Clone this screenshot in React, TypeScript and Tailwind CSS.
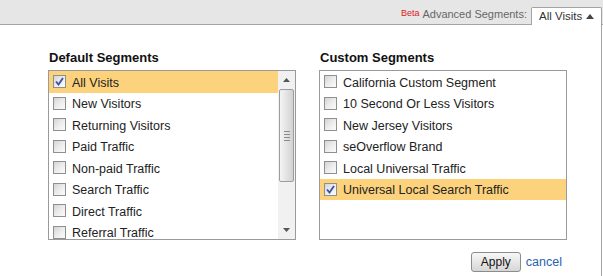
const defaults = [
  { label: "All Visits", checked: true },
  { label: "New Visitors" },
  { label: "Returning Visitors" },
  { label: "Paid Traffic" },
  { label: "Non-paid Traffic" },
  { label: "Search Traffic" },
  { label: "Direct Traffic" },
  { label: "Referral Traffic" },
];

const customs = [
  { label: "California Custom Segment" },
  { label: "10 Second Or Less Visitors" },
  { label: "New Jersey Visitors" },
  { label: "seOverflow Brand" },
  { label: "Local Universal Traffic" },
  { label: "Universal Local Search Traffic", checked: true },
];

function Checkbox({ checked }: { checked?: boolean }) {
  return (
    <span className="flex h-[13px] w-[13px] shrink-0 items-center justify-center border border-[#8e8f8f] bg-gradient-to-br from-[#d4d4d4] via-[#ececec] to-[#fbfbfb]">
      {checked && (
        <svg width="9" height="9" viewBox="0 0 9 9">
          <path d="M1 4.5 L3.5 7.5 L8 1" fill="none" stroke="#3b4fa6" strokeWidth="1.8" />
        </svg>
      )}
    </span>
  );
}

function Row({ label, checked }: { label: string; checked?: boolean }) {
  return (
    <div
      className={`flex h-[21.5px] items-center pl-[4px] ${checked ? "bg-[#fdd27c]" : ""}`}
    >
      <Checkbox checked={checked} />
      <span className="ml-[6px] whitespace-nowrap pt-[2px] leading-[14px]">{label}</span>
    </div>
  );
}

function Scrollbar() {
  return (
    <div className="flex w-[17px] shrink-0 flex-col bg-[#f1f1f1]">
      {/* up arrow */}
      <div className="flex h-[18px] items-center justify-center">
        <svg width="7" height="4" viewBox="0 0 7 4">
          <path d="M0 4 L3.5 0 L7 4 Z" fill="#555" />
        </svg>
      </div>
      {/* thumb */}
      <div className="mx-[1px] flex h-[93px] items-center justify-center rounded-[2px] border border-[#9c9c9c] bg-gradient-to-r from-[#f4f4f4] to-[#d2d2d2]">
        <div className="flex flex-col gap-[2px]">
          <span className="block h-px w-[6px] bg-[#8a8a8a]" />
          <span className="block h-px w-[6px] bg-[#8a8a8a]" />
          <span className="block h-px w-[6px] bg-[#8a8a8a]" />
          <span className="block h-px w-[6px] bg-[#8a8a8a]" />
        </div>
      </div>
      <div className="flex-1" />
      {/* down arrow */}
      <div className="flex h-[18px] items-center justify-center">
        <svg width="7" height="4" viewBox="0 0 7 4">
          <path d="M0 0 L3.5 4 L7 0 Z" fill="#555" />
        </svg>
      </div>
    </div>
  );
}

export default function App() {
  return (
    <div className="h-[276px] w-[603px] overflow-hidden bg-white font-['Liberation_Sans',Arial,sans-serif] text-[#222]">
      {/* Header bar */}
      <div className="flex h-[25px] bg-[#e6e6e6]">
        <div className="flex flex-1 items-end justify-end border-b border-[#a4a4a4] pb-[3px] pr-[4px]">
          <span className="mb-[3px] mr-[3px] text-[9px] leading-none text-[#e0161b]">Beta</span>
          <span className="text-[11px] leading-[13px] text-[#666]">Advanced Segments:</span>
        </div>
        <div className="mt-[7px] flex w-[71px] items-center rounded-t-[2px] border border-b-0 border-[#a4a4a4] bg-white pl-[7px] text-[11.5px] text-[#333]">
          All Visits
          <svg className="ml-[4px]" width="8" height="5" viewBox="0 0 8 5">
            <path d="M0 5 L4 0 L8 5 Z" fill="#444" />
          </svg>
        </div>
        <div className="w-[1px] border-b border-[#a4a4a4]" />
      </div>

      {/* Panel */}
      <div className="flex h-[251px] w-[602px] gap-[23px] border-r border-[#a4a4a4] pl-[48px] pt-[25px] text-[12.5px]">
        {/* Default segments */}
        <div className="w-[248px]">
          <h2 className="mb-[5px] pl-[1px] text-[13px] font-bold leading-[15px] text-[#111]">
            Default Segments
          </h2>
          <div className="flex h-[170px] border border-[#9a9a9a]">
            <div className="flex-1 overflow-hidden">
              {defaults.map((d) => (
                <Row key={d.label} label={d.label} checked={d.checked} />
              ))}
            </div>
            <Scrollbar />
          </div>
        </div>

        {/* Custom segments */}
        <div className="w-[248px]">
          <h2 className="mb-[5px] pl-[1px] text-[13px] font-bold leading-[15px] text-[#111]">
            Custom Segments
          </h2>
          <div className="h-[170px] border border-[#9a9a9a]">
            {customs.map((c) => (
              <Row key={c.label} label={c.label} checked={c.checked} />
            ))}
          </div>
          <div className="mt-[12px] flex items-center justify-end gap-[5px] pr-[5px]">
            <button className="h-[20px] w-[50px] rounded-[3px] border border-[#8c8c8c] bg-gradient-to-b from-[#f7f7f7] to-[#d6d6d6] text-[12px] text-[#111]">
              Apply
            </button>
            <a className="text-[12.5px] text-[#2a62b0]">cancel</a>
          </div>
        </div>
      </div>
    </div>
  );
}
